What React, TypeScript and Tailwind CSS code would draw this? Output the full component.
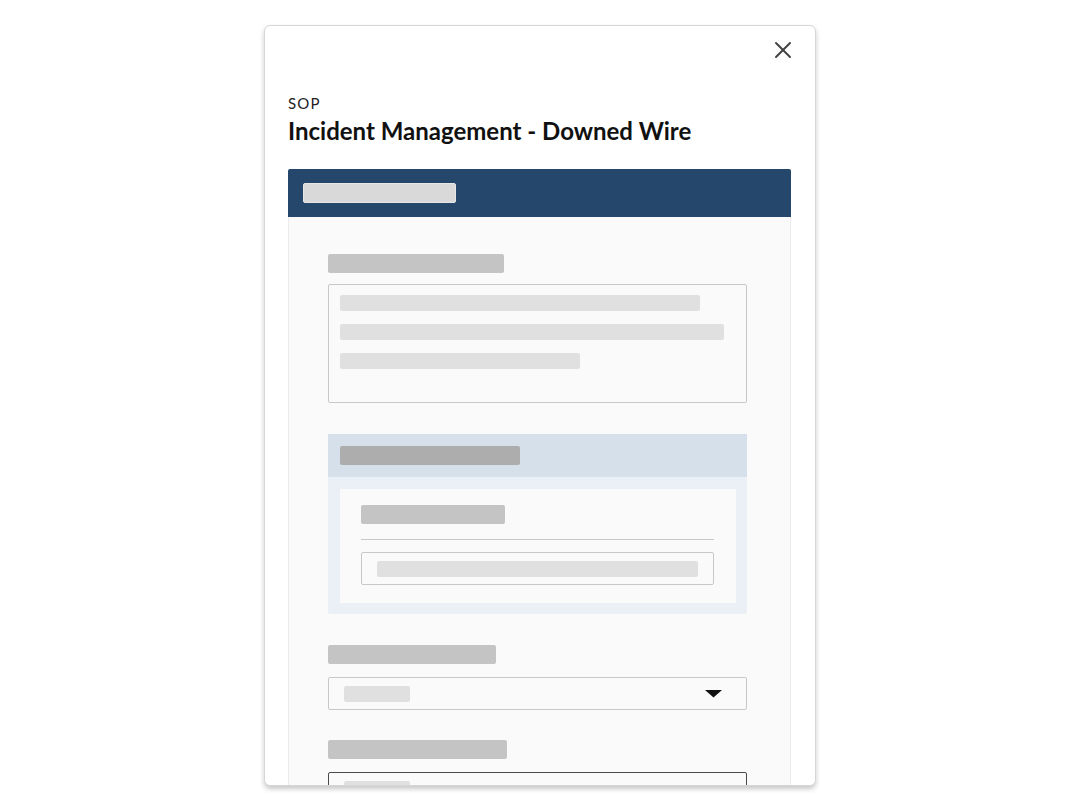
import { X } from 'lucide-react';

const Bar = ({ className }: { className: string }) => <div className={`rounded-[2px] ${className}`} />;

const Select = ({ open }: { open?: boolean }) => (
  <div
    className={`flex h-[33px] items-center justify-between rounded-[2px] border pl-[15px] pr-[24px] ${
      open ? 'border-[#4a4a4a]' : 'border-[#c8c8c8]'
    }`}
  >
    <Bar className="h-[16px] w-[66px] bg-[#e0e0e0]" />
    <svg width="17" height="8" viewBox="0 0 17 8" className={open ? 'rotate-180' : ''}>
      <path d="M0 0 H17 L8.5 7.5 Z" fill="#111" />
    </svg>
  </div>
);

const App = () => {
  return (
    <div className="h-[810px] bg-white pt-[25px] font-['Lato',sans-serif]">
      <div className="mx-auto h-[761px] w-[552px] overflow-hidden rounded-[6px] border border-[#d6d6d6] bg-white shadow-[0_3px_5px_rgba(0,0,0,0.22)]">
        <div className="flex justify-end pr-[18px] pt-[10px]">
          <button className="flex h-[28px] w-[28px] items-center justify-center text-[#444]">
            <X className="h-[28px] w-[28px]" strokeWidth={1.7} />
          </button>
        </div>

        <div className="pl-[23px] pr-[24px]">
          <p className="mt-[31px] text-[15px] leading-[16px] tracking-[0.08em] text-[#222]">SOP</p>
          <h1 className="mt-[5px] text-[24px] font-bold leading-[30px] text-[#111]">
            Incident Management - Downed Wire
          </h1>

          <div className="mt-[23px]">
            <div className="flex h-[48px] items-center rounded-t-[2px] bg-[#24476b] pl-[15px]">
              <Bar className="h-[20px] w-[153px] border border-[#e6e6e6] bg-[#d9d9d9]" />
            </div>

            <div className="h-[600px] border-x border-[#ececec] bg-[#fafafa] pl-[39px] pr-[43px] pt-[37px]">
              <Bar className="h-[19px] w-[176px] bg-[#c4c4c4]" />
              <div className="mt-[11px] h-[119px] rounded-[2px] border border-[#c8c8c8] pl-[11px] pt-[10px]">
                <Bar className="h-[16px] w-[360px] bg-[#e0e0e0]" />
                <Bar className="mt-[13px] h-[16px] w-[384px] bg-[#e0e0e0]" />
                <Bar className="mt-[13px] h-[16px] w-[240px] bg-[#e0e0e0]" />
              </div>

              <div className="mt-[31px] rounded-[2px] bg-[#eaf0f6]">
                <div className="flex h-[43px] items-center bg-[#d6e0ea] pl-[12px]">
                  <Bar className="h-[19px] w-[180px] bg-[#adadad]" />
                </div>
                <div className="pb-[11px] pl-[12px] pr-[11px] pt-[12px]">
                  <div className="bg-[#fafafa] pb-[18px] pl-[21px] pr-[22px] pt-[16px]">
                    <Bar className="h-[19px] w-[144px] bg-[#c4c4c4]" />
                    <div className="mt-[15px] h-px bg-[#c8c8c8]" />
                    <div className="mt-[12px] flex h-[33px] items-center rounded-[2px] border border-[#c8c8c8] px-[15px]">
                      <Bar className="h-[16px] w-full bg-[#e0e0e0]" />
                    </div>
                  </div>
                </div>
              </div>

              <Bar className="mt-[31px] h-[19px] w-[168px] bg-[#c4c4c4]" />
              <div className="mt-[13px]">
                <Select />
              </div>

              <Bar className="mt-[30px] h-[19px] w-[179px] bg-[#c4c4c4]" />
              <div className="mt-[13px]">
                <Select open />
              </div>
            </div>
          </div>
        </div>
      </div>
    </div>
  );
};

export default App;
